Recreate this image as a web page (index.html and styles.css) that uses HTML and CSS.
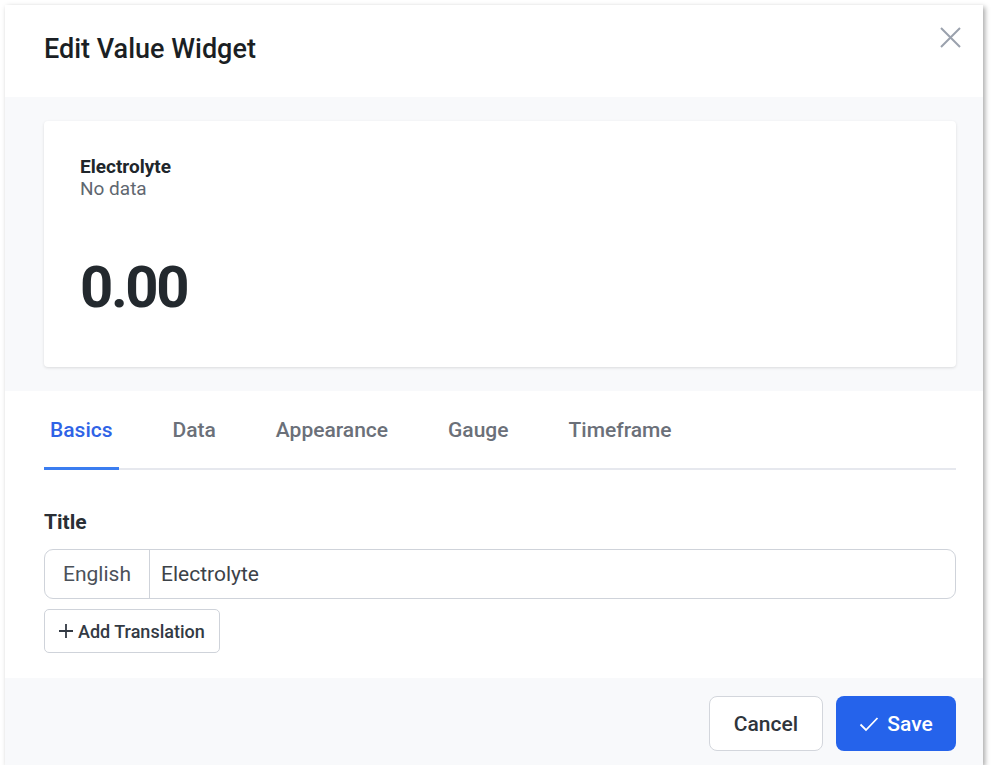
FILE: index.html
```html
<!DOCTYPE html>
<html lang="en">
<head>
<meta charset="utf-8">
<title>Edit Value Widget</title>
<link rel="stylesheet" href="styles.css">
</head>
<body>
<div class="dialog">
  <header class="dlg-header">
    <h1 class="dlg-title">Edit Value Widget</h1>
    <button class="close-btn" aria-label="Close">
      <svg width="22" height="22" viewBox="0 0 22 22"><path d="M2 1 L21 20 M21 1 L2 20" stroke="#9aa1ad" stroke-width="2" fill="none"/></svg>
    </button>
  </header>
  <section class="preview">
    <div class="card">
      <div class="card-title">Electrolyte</div>
      <div class="card-sub">No data</div>
      <div class="card-value">0.00</div>
    </div>
  </section>
  <section class="body">
    <nav class="tabs">
      <div class="tab active">Basics</div>
      <div class="tab">Data</div>
      <div class="tab">Appearance</div>
      <div class="tab">Gauge</div>
      <div class="tab">Timeframe</div>
    </nav>
    <div class="field-label">Title</div>
    <div class="input-group">
      <div class="addon">English</div>
      <div class="input-text">Electrolyte</div>
    </div>
    <button class="add-btn">
      <svg class="plus" width="14" height="14" viewBox="0 0 14 14"><path d="M7 0 V14 M0 7 H14" stroke="#333a44" stroke-width="1.8" fill="none"/></svg>
      Add Translation
    </button>
  </section>
  <footer class="dlg-footer">
    <button class="btn btn-cancel">Cancel</button>
    <button class="btn btn-save">
      <svg width="20" height="16" viewBox="0 0 20 16"><path d="M1.5 8.5 L7 14 L18.5 2" stroke="#fff" stroke-width="1.8" fill="none"/></svg>
      Save
    </button>
  </footer>
</div>
</body>
</html>
```

FILE: styles.css
```css
* { box-sizing: border-box; }
html, body { margin: 0; padding: 0; background: #ffffff; }
body {
  padding: 5px 0 0 5px;
  font-family: Roboto, "Liberation Sans", Arial, sans-serif;
  color: #1f2328;
}
.dialog {
  width: 978px;
  height: 760px;
  background: #ffffff;
  box-shadow: 2px 2px 5px rgba(0,0,0,0.35);
  display: flex;
  flex-direction: column;
}
.dlg-header {
  height: 92px;
  padding: 0 26px 0 39px;
  display: flex;
  align-items: flex-start;
  justify-content: space-between;
}
.dlg-title {
  margin: 29px 0 0 0;
  font-size: 27px;
  font-weight: 500;
  line-height: 30px;
  color: #1b1f24;
}
.close-btn {
  margin: 22px -4px 0 0;
  background: none;
  border: 0;
  padding: 0;
  width: 22px;
  height: 22px;
}
.preview {
  background: #f8f9fb;
  padding: 24px 27px 24px 39px;
}
.card {
  background: #fff;
  border-radius: 4px;
  box-shadow: 0 1px 3px rgba(0,0,0,0.12);
  height: 246px;
  padding: 35px 36px 0 36px;
}
.card-title {
  font-size: 19px;
  font-weight: 700;
  line-height: 22px;
  color: #20262b;
}
.card-sub {
  font-size: 19px;
  line-height: 22px;
  color: #5f6770;
}
.card-value {
  margin-top: 52px;
  font-size: 58px;
  font-weight: 700;
  line-height: 70px;
  color: #23292e;
  letter-spacing: -2.4px;
}
.body {
  flex: 1;
  padding: 0 27px 0 39px;
}
.tabs {
  margin-top: 25px;
  display: flex;
  gap: 48px;
  border-bottom: 2px solid #e6e8ee;
}
.tab {
  padding: 0 6px;
  font-size: 21px;
  font-weight: 500;
  line-height: 28px;
  height: 54px;
  color: #6b7079;
  margin-bottom: -2px;
  border-bottom: 3px solid transparent;
}
.tab.active {
  color: #2f63e6;
  border-bottom-color: #3b7df0;
}
.field-label {
  margin-top: 40px;
  font-size: 21px;
  font-weight: 700;
  line-height: 24px;
  color: #2a2f35;
}
.input-group {
  margin-top: 15px;
  height: 50px;
  border: 1px solid #cfd3da;
  border-radius: 9px;
  display: flex;
  align-items: stretch;
}
.addon {
  width: 105px;
  border-right: 1px solid #cfd3da;
  display: flex;
  align-items: center;
  justify-content: center;
  font-size: 21px;
  color: #4b5159;
}
.input-text {
  padding-left: 11px;
  display: flex;
  align-items: center;
  font-size: 21px;
  color: #3c4248;
}
.add-btn {
  margin-top: 10px;
  height: 44px;
  width: 176px;
  background: #fff;
  border: 1px solid #cfd3da;
  border-radius: 5px;
  font-family: inherit;
  font-size: 18px;
  font-weight: 500;
  color: #333a44;
  display: flex;
  align-items: center;
  gap: 5px;
  padding: 0 0 0 14px;
}
.plus { flex: none; }
.dlg-footer {
  background: #f8f9fb;
  height: 87px;
  padding: 18px 27px 0 0;
  display: flex;
  justify-content: flex-end;
  align-items: flex-start;
  gap: 13px;
}
.btn {
  height: 55px;
  border-radius: 8px;
  font-family: inherit;
  font-size: 21px;
  font-weight: 500;
  display: flex;
  align-items: center;
  justify-content: center;
}
.btn-cancel {
  width: 114px;
  background: #fff;
  border: 1px solid #d3d6dc;
  color: #2f353c;
}
.btn-save {
  width: 120px;
  background: #2563eb;
  border: 0;
  color: #fff;
  gap: 8px;
}
```
